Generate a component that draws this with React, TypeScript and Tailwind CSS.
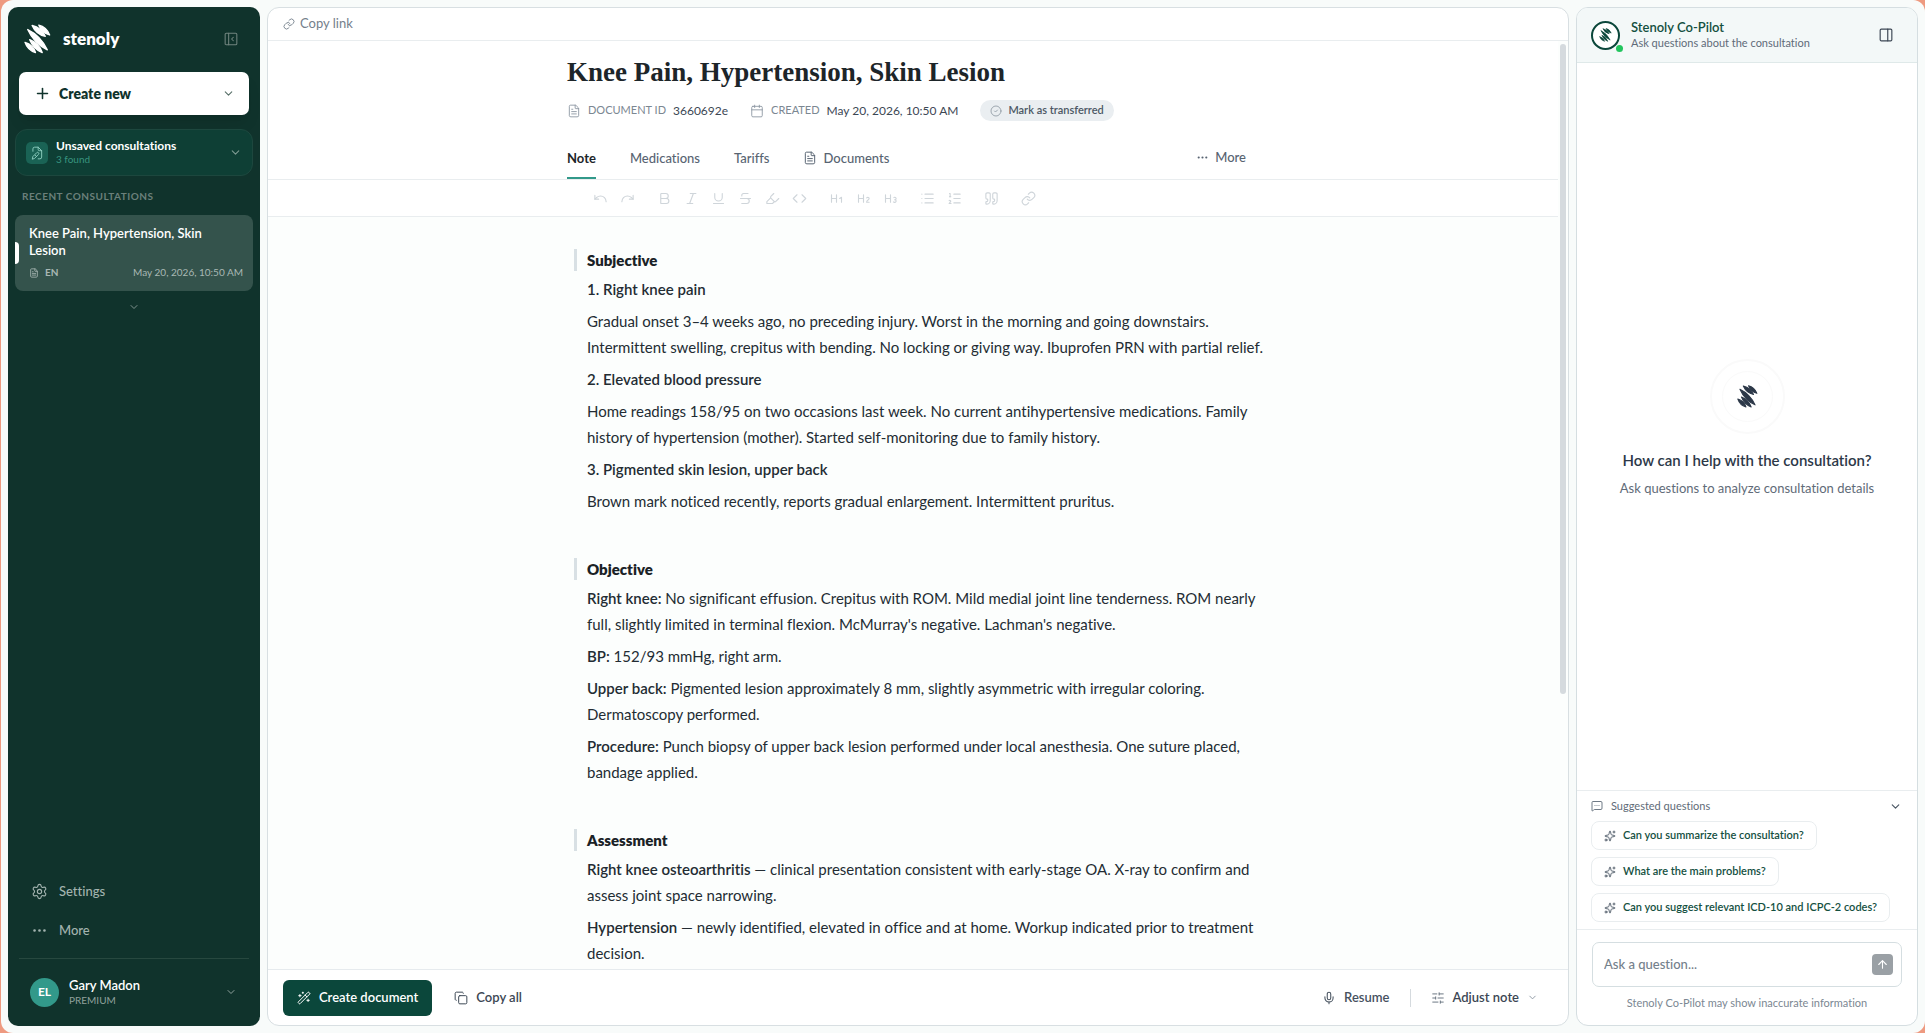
import type { ComponentType, ReactNode } from "react";
// Icons
import {
  ArrowUp,
  Bold,
  Calendar,
  ChevronDown,
  CircleCheck,
  Code,
  Copy,
  Ellipsis,
  FileText,
  Heading1,
  Heading2,
  Heading3,
  Highlighter,
  Italic,
  Link,
  List,
  ListOrdered,
  MessageSquareMore,
  Mic,
  Plus,
  Quote,
  Redo,
  Settings,
  SlidersHorizontal,
  Sparkles,
  Strikethrough,
  Underline,
  Undo,
  WandSparkles,
} from "lucide-react";

type Icon = ComponentType<{ size?: number; strokeWidth?: number; className?: string }>;

const toolbar: { label: string; icon: Icon }[][] = [
  [
    { label: "Undo", icon: Undo },
    { label: "Redo", icon: Redo },
  ],
  [
    { label: "Bold", icon: Bold },
    { label: "Italic", icon: Italic },
    { label: "Underline", icon: Underline },
    { label: "Strikethrough", icon: Strikethrough },
    { label: "Highlight", icon: Highlighter },
    { label: "Code", icon: Code },
  ],
  [
    { label: "Heading 1", icon: Heading1 },
    { label: "Heading 2", icon: Heading2 },
    { label: "Heading 3", icon: Heading3 },
  ],
  [
    { label: "Bullet list", icon: List },
    { label: "Ordered list", icon: ListOrdered },
  ],
  [{ label: "Quote", icon: Quote }],
  [{ label: "Link", icon: Link }],
];

const note: { title: string; lines: { lead?: string; text?: string }[] }[] = [
  {
    title: "Subjective",
    lines: [
      { lead: "1. Right knee pain" },
      {
        text: "Gradual onset 3–4 weeks ago, no preceding injury. Worst in the morning and going downstairs. Intermittent swelling, crepitus with bending. No locking or giving way. Ibuprofen PRN with partial relief.",
      },
      { lead: "2. Elevated blood pressure" },
      {
        text: "Home readings 158/95 on two occasions last week. No current antihypertensive medications. Family history of hypertension (mother). Started self-monitoring due to family history.",
      },
      { lead: "3. Pigmented skin lesion, upper back" },
      { text: "Brown mark noticed recently, reports gradual enlargement. Intermittent pruritus." },
    ],
  },
  {
    title: "Objective",
    lines: [
      {
        lead: "Right knee:",
        text: "No significant effusion. Crepitus with ROM. Mild medial joint line tenderness. ROM nearly full, slightly limited in terminal flexion. McMurray's negative. Lachman's negative.",
      },
      { lead: "BP:", text: "152/93 mmHg, right arm." },
      {
        lead: "Upper back:",
        text: "Pigmented lesion approximately 8 mm, slightly asymmetric with irregular coloring. Dermatoscopy performed.",
      },
      {
        lead: "Procedure:",
        text: "Punch biopsy of upper back lesion performed under local anesthesia. One suture placed, bandage applied.",
      },
    ],
  },
  {
    title: "Assessment",
    lines: [
      {
        lead: "Right knee osteoarthritis",
        text: "— clinical presentation consistent with early-stage OA. X-ray to confirm and assess joint space narrowing.",
      },
      {
        lead: "Hypertension",
        text: "— newly identified, elevated in office and at home. Workup indicated prior to treatment decision.",
      },
    ],
  },
];

const questions = [
  "Can you summarize the consultation?",
  "What are the main problems?",
  "Can you suggest relevant ICD-10 and ICPC-2 codes?",
];

function Logo({ className }: { className?: string }) {
  return (
    <svg viewBox="0 0 80 88" className={className} fill="currentColor" stroke="currentColor" strokeWidth="4" strokeLinejoin="round" aria-hidden="true">
      {/* Five leaf-shaped strokes stacked into an S */}
      <path d="M44 3Q66 8 76 32Q53 26 44 3Z" />
      <path d="M24 4Q52 11 63 36Q36 31 24 4Z" />
      <path d="M11 16Q49 34 69 76Q30 58 11 16Z" />
      <path d="M17 46Q44 56 54 84Q28 74 17 46Z" />
      <path d="M3 54Q27 61 34 84Q11 78 3 54Z" />
    </svg>
  );
}

function FilePenIcon() {
  return (
    <svg viewBox="0 0 24 24" className="size-3.5" fill="none" stroke="currentColor" strokeWidth="1.6" strokeLinecap="round" strokeLinejoin="round" aria-hidden="true">
      <path d="M5 9V5a3 3 0 0 1 3-3h6l6 6v11a3 3 0 0 1-3 3h-3M14 2v4a2 2 0 0 0 2 2h4" />
      <path d="m4 22 1-4 6.500-6.500a2 2 0 0 1 3 3L8 21ZM9 16l2 2" />
    </svg>
  );
}

function CollapseIcon() {
  return (
    <svg viewBox="0 0 24 24" className="size-3.5" fill="none" stroke="currentColor" strokeWidth="1.8" strokeLinecap="round" strokeLinejoin="round" aria-hidden="true">
      <rect x="2" y="2" width="20" height="20" rx="2" />
      <path d="M8 2v20M16 9l-3 3 3 3" />
    </svg>
  );
}

function PanelIcon() {
  return (
    <svg viewBox="0 0 24 24" className="size-3.5" fill="none" stroke="currentColor" strokeWidth="2" strokeLinecap="round" strokeLinejoin="round" aria-hidden="true">
      <rect x="2" y="2" width="20" height="20" rx="2" />
      <path d="M15 2v20" />
    </svg>
  );
}

function Sidebar() {
  return (
    <aside className="flex w-[252px] shrink-0 flex-col rounded-[10px] bg-[#10332c] text-white">
      <div className="flex items-center justify-between pt-4 pr-[18px] pl-4">
        <div className="flex items-center gap-3">
          <Logo className="h-[30px] w-[27px]" />
          <span className="text-[17px] leading-8 font-extrabold">stenoly</span>
        </div>
        <button aria-label="Collapse sidebar" className="p-1 text-[#71857f]">
          <CollapseIcon />
        </button>
      </div>

      <button className="mx-[11px] mt-[17px] flex h-[43px] items-center gap-2 rounded-[7px] bg-white pr-3.5 pl-[15px] text-[#10332c] shadow-lg">
        <Plus size={17} strokeWidth={2.2} />
        <span className="text-sm font-extrabold">Create new</span>
        <ChevronDown size={13} className="ml-auto text-[#587069]" />
      </button>

      <button className="mx-[7px] mt-3.5 flex h-[47px] items-center gap-2 rounded-xl border border-[#1d473e] bg-[#0e3f35] pr-2.5 pl-2.5 text-left">
        <span className="grid size-[22px] place-items-center rounded-[5px] bg-[#1a6355] text-[#8fd0c2]">
          <FilePenIcon />
        </span>
        <span className="flex flex-col pb-0.5">
          <span className="text-xs leading-[15px] font-bold">Unsaved consultations</span>
          <span className="text-[10px] leading-3 text-[#38947f]">3 found</span>
        </span>
        <ChevronDown size={13} className="ml-auto text-[#7d9a92]" />
      </button>

      <h2 className="mt-[13px] px-3.5 text-[10px] leading-3.5 font-bold tracking-wider text-[#6b807b]">RECENT CONSULTATIONS</h2>

      <a href="#" className="relative mx-[7px] mt-3 rounded-lg bg-[#34534c] px-3.5 pt-2.5 pb-[11px] before:absolute before:top-[27px] before:left-0 before:h-[22px] before:w-1 before:rounded-r before:bg-white">
        <div className="text-[13px] leading-[17px] font-semibold">Knee Pain, Hypertension, Skin Lesion</div>
        <div className="mt-1.5 -mr-1 flex items-center gap-1.5 text-[10px] leading-[15px] text-[#a9b8b4]">
          <FileText size={10} />
          <span className="font-bold">EN</span>
          <span className="ml-auto">May 20, 2026, 10:50 AM</span>
        </div>
      </a>
      <button aria-label="Show more consultations" className="mt-2.5 self-center text-[#7f938e]">
        <ChevronDown size={12} />
      </button>

      <nav className="mt-auto flex flex-col gap-[19px] px-[23px] pb-[18px] text-[13px] leading-5 font-medium text-[#a3b3af]">
        <a href="#" className="flex items-center gap-[11px]">
          <Settings size={17} strokeWidth={1.6} />
          Settings
        </a>
        <a href="#" className="flex items-center gap-[11px]">
          <Ellipsis size={17} strokeWidth={1.8} />
          More
        </a>
      </nav>

      <button className="mx-[11px] flex items-center gap-2.5 border-t border-[#27483f] pt-[18px] pr-3 pb-[19px] pl-[11px] text-left">
        <span className="grid size-[29px] place-items-center rounded-full bg-[#32998a] text-xs font-bold">EL</span>
        <span className="flex flex-col">
          <span className="text-[13px] leading-4 font-semibold">Gary Madon</span>
          <span className="text-[10px] leading-[14px] text-[#8fa19c]">PREMIUM</span>
        </span>
        <ChevronDown size={12} className="ml-auto text-[#8fa19c]" />
      </button>
    </aside>
  );
}

function Meta({ icon, label, value }: { icon: ReactNode; label: string; value: string }) {
  return (
    <div className="flex items-center gap-[7px]">
      {icon}
      <span className="text-[11px] text-[#7b8792]">{label}</span>
      <span className="text-xs text-[#3c4754]">{value}</span>
    </div>
  );
}

function Editor() {
  return (
    <main className="flex min-w-0 flex-1 flex-col overflow-hidden rounded-xl border border-[#d8dfe2] bg-white">
      <div className="flex h-[33px] shrink-0 items-center border-b border-[#e9edef] px-[15px]">
        <button className="flex items-center gap-[5px] text-[13px] text-[#74808b]">
          <Link size={12} strokeWidth={1.8} />
          Copy link
        </button>
      </div>

      <div className="relative min-h-0 flex-1 overflow-hidden bg-[#fcfefd] pr-2.5">
        {/* Scrollbar thumb */}
        <div className="absolute top-[3px] right-0.5 h-[70%] w-1.5 rounded-full bg-[#d5dade]" />

        <header className="border-b border-[#e9edef] bg-white">
          <div className="mx-auto max-w-[692px]">
            <h1 className="pt-[13px] font-['Liberation_Serif',serif] text-[27px] leading-9 font-bold text-[#1d2529]">Knee Pain, Hypertension, Skin Lesion</h1>
            <div className="mt-2.5 flex items-center gap-[22px]">
              <Meta icon={<FileText size={14} strokeWidth={1.5} className="text-[#8a95a0]" />} label="DOCUMENT ID" value="3660692e" />
              <Meta icon={<Calendar size={14} strokeWidth={1.5} className="text-[#8a95a0]" />} label="CREATED" value="May 20, 2026, 10:50 AM" />
              <button className="flex h-[21px] items-center gap-1.5 rounded-full bg-[#eaeef1] px-2.5 text-[11px] font-semibold text-[#4c5865]">
                <CircleCheck size={12} strokeWidth={1.6} className="text-[#8a95a0]" />
                Mark as transferred
              </button>
            </div>
            <nav className="mt-[19px] flex h-[39px] gap-[34px] text-[13px] leading-9 font-medium text-[#586472]">
              <a href="#" className="border-b-2 border-[#32998a] font-bold text-[#1d2529]">
                Note
              </a>
              <a href="#">Medications</a>
              <a href="#">Tariffs</a>
              <a href="#" className="flex h-9 items-center gap-1.5">
                <FileText size={14} strokeWidth={1.7} />
                Documents
              </a>
              <button className="mr-[13px] ml-auto flex h-[34px] items-center gap-1.5">
                <Ellipsis size={13} />
                More
              </button>
            </nav>
          </div>
        </header>

        <div className="border-b border-[#e9edef] bg-white">
          <div className="mx-auto flex h-9 max-w-[692px] items-center gap-2.5 px-5 text-[#cfd5da]">
            {toolbar.map((group, index) => (
              <div key={index} className="flex">
                {group.map(({ label, icon: ToolIcon }) => (
                  <button key={label} aria-label={label} className="grid h-7 w-[27px] place-items-center">
                    <ToolIcon size={15} strokeWidth={1.8} />
                  </button>
                ))}
              </div>
            ))}
          </div>
        </div>

        <article className="mx-auto flex max-w-[692px] flex-col gap-11 pt-8 pl-5 text-[15px] leading-[26px] text-[#232c33]">
          {note.map((section) => (
            <section key={section.title}>
              <h2 className="-ml-[13px] border-l-[3px] border-[#d8e0e4] pl-2.5 text-[15px] leading-[22px] font-extrabold text-[#1a2226]">{section.title}</h2>
              <div className="mt-[5px] -mr-5 flex flex-col gap-1.5">
                {section.lines.map((line, index) => (
                  <p key={index}>
                    {line.lead && <strong className="font-semibold">{line.lead}</strong>} {line.text}
                  </p>
                ))}
              </div>
            </section>
          ))}
        </article>
      </div>

      <footer className="flex h-14 shrink-0 items-center border-t border-[#e6ebee] pr-[30px] pl-[15px] text-[13px] font-semibold text-[#47525f]">
        <button className="flex h-9 items-center gap-2 rounded-md bg-[#0b473b] px-3.5 text-white">
          <WandSparkles size={14} strokeWidth={1.7} />
          Create document
        </button>
        <button className="ml-[22px] flex items-center gap-2 text-[#3c4754]">
          <Copy size={14} strokeWidth={1.7} />
          Copy all
        </button>
        <button className="ml-auto flex items-center gap-2">
          <Mic size={14} strokeWidth={1.8} />
          Resume
        </button>
        <span className="mx-5 h-[18px] w-px bg-[#d5dade]" />
        <button className="flex items-center gap-2 text-[#3c4754]">
          <SlidersHorizontal size={14} strokeWidth={1.7} className="text-[#6b7683]" />
          Adjust note
          <ChevronDown size={11} className="text-[#8a95a0]" />
        </button>
      </footer>
    </main>
  );
}

function CoPilot() {
  return (
    <aside className="flex w-[342px] shrink-0 flex-col overflow-hidden rounded-xl border border-[#d5dee1] bg-white">
      <header className="flex h-[55px] shrink-0 items-center gap-[11px] border-b border-[#dfe9e9] bg-[#f3f8f8] pr-6 pl-3.5">
        <div className="relative grid size-[29px] place-items-center rounded-full border-2 border-[#0b473b] bg-white text-[#0b473b]">
          <Logo className="h-3.5 w-[13px]" />
          <span className="absolute -right-[5px] -bottom-1 size-[7px] rounded-full bg-[#22c55e]" />
        </div>
        <div>
          <h2 className="text-[13px] leading-4 font-semibold text-[#14503f]">Stenoly Co-Pilot</h2>
          <p className="text-[11px] leading-4 text-[#5f6b78]">Ask questions about the consultation</p>
        </div>
        <button aria-label="Close panel" className="ml-auto text-[#3c4754]">
          <PanelIcon />
        </button>
      </header>

      <div className="flex flex-1 flex-col items-center justify-center pt-1 text-center">
        <div className="grid size-[75px] place-items-center rounded-full border-2 border-[#fafafa]">
          <div className="grid size-[51px] place-items-center rounded-full border border-[#fafafa] text-[#2c3848]">
            <Logo className="h-[23px] w-[21px]" />
          </div>
        </div>
        <h3 className="mt-4 text-[15px] leading-5 font-semibold text-[#2c3848]">How can I help with the consultation?</h3>
        <p className="mt-2 text-[13px] leading-5 text-[#5f6b78]">Ask questions to analyze consultation details</p>
      </div>

      <div className="flex flex-col items-start gap-[7px] border-t border-[#e9edef] px-3.5 py-[7px]">
        <button className="flex w-full items-center gap-2 pr-px text-[11px] leading-4 text-[#5f6b78]">
          <MessageSquareMore size={12} strokeWidth={1.8} />
          Suggested questions
          <ChevronDown size={13} strokeWidth={2.2} className="ml-auto text-[#4c5865]" />
        </button>
        {questions.map((question) => (
          <button key={question} className="flex h-[29px] items-center gap-[7px] rounded-lg border border-[#e9edef] px-3 text-[11px] font-semibold text-[#14503f]">
            <Sparkles size={12} strokeWidth={1.8} className="text-[#4c5865]" />
            {question}
          </button>
        ))}
      </div>

      <div className="border-t border-[#e9edef] px-[15px] pt-3 pb-3.5">
        <form className="flex h-[45px] items-center rounded-[7px] border border-[#d5dee1] pr-2 pl-[11px]">
          <input aria-label="Ask a question" placeholder="Ask a question..." className="min-w-0 flex-1 text-[13px] outline-none placeholder:font-medium placeholder:text-[#74808b]" />
          <button type="button" aria-label="Send" className="grid size-[21px] place-items-center rounded bg-[#9aa0a5] text-white">
            <ArrowUp size={13} />
          </button>
        </form>
        <p className="mt-2 text-center text-[11px] leading-4 text-[#7b8792]">Stenoly Co-Pilot may show inaccurate information</p>
      </div>
    </aside>
  );
}

export default function App() {
  return (
    <div className="bg-[#ee9a80] font-[Lato,sans-serif] [font-variant-ligatures:none]">
      <div className="ml-px flex h-screen gap-[7px] rounded-xl bg-[#f8fbfa] p-[7px]">
        <Sidebar />
        <Editor />
        <CoPilot />
      </div>
    </div>
  );
}
